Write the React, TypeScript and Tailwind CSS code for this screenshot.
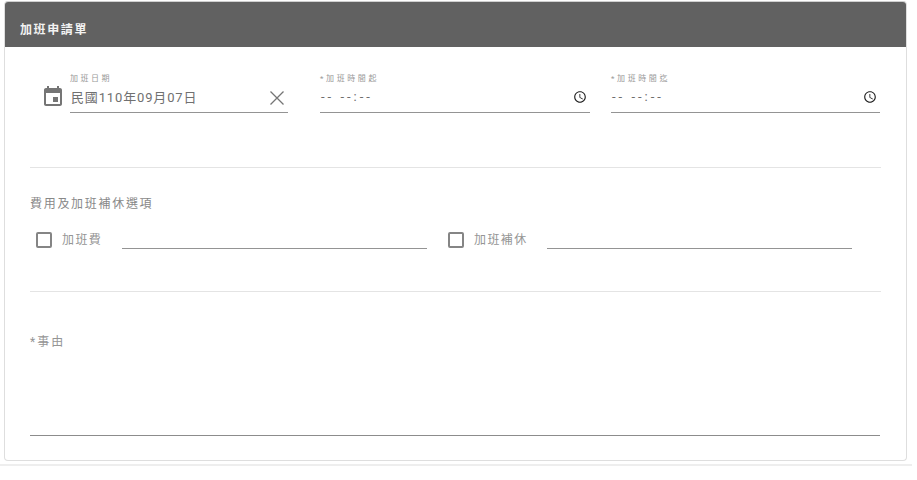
const FONT = "font-['Roboto','Noto_Sans_CJK_TC',sans-serif]";

function ClockIcon() {
  return (
    <svg width="14" height="14" viewBox="0 0 24 24" fill="#212121">
      <path d="M11.99 2C6.47 2 2 6.48 2 12s4.47 10 9.99 10C17.52 22 22 17.52 22 12S17.52 2 11.99 2zM12 20c-4.42 0-8-3.58-8-8s3.58-8 8-8 8 3.58 8 8-3.58 8-8 8z" />
      <path d="M12.5 7H11v6l5.25 3.15.75-1.23-4.5-2.67z" />
    </svg>
  );
}

function EventIcon() {
  return (
    <svg width="24" height="24" viewBox="0 0 24 24" fill="#757575">
      <path d="M17 12h-5v5h5v-5zM16 1v2H8V1H6v2H5c-1.11 0-1.99.9-1.99 2L3 19c0 1.1.89 2 2 2h14c1.1 0 2-.9 2-2V5c0-1.1-.9-2-2-2h-1V1h-2zm3 18H5V8h14v11z" />
    </svg>
  );
}

function CloseIcon() {
  return (
    <svg width="24" height="24" viewBox="0 0 24 24" fill="none" stroke="#757575" strokeWidth="1.3">
      <path d="M5.5 5.5l13 13M18.5 5.5l-13 13" />
    </svg>
  );
}

function TimeField({ label, width }: { label: string; width: string }) {
  return (
    <div className={`${width} h-[41px] pt-[2px] border-b border-[#949494]`}>
      <div className="text-[8px] leading-[10px] tracking-[2.6px] text-[#999999]">{label}</div>
      <div className="flex items-center justify-between mt-[5px] pr-[3px]">
        <span className="ml-[1px] text-[13px] leading-[16px] tracking-[3px] text-[#6e6e6e]">-- --:--</span>
        <ClockIcon />
      </div>
    </div>
  );
}

function CheckItem({ label, labelWidth, lineWidth }: { label: string; labelWidth: string; lineWidth: string }) {
  return (
    <div className="flex items-start">
      <span className="w-4 h-4 mt-[1px] rounded-[2px] border-2 border-[#858585] bg-white" />
      <span className={`${labelWidth} ml-[10px] text-[12px] leading-[18px] tracking-[1.4px] text-[#959595]`}>{label}</span>
      <span className={`${lineWidth} h-[18px] border-b border-[#949494]`} />
    </div>
  );
}

export default function App() {
  return (
    <div className={`${FONT} h-[480px] w-[917px] bg-white overflow-hidden`}>
      <div className="w-[912px]">
        <div className="ml-[4px] mt-[1px] w-[903px] h-[460px] rounded-[4px] border border-[#dedede] border-t-[#cfcfcf] bg-white overflow-hidden">
          <div className="h-[45px] bg-[#616161] px-[15px] pt-[19px] text-[12px] leading-[18px] font-bold tracking-[1.6px] text-[#f2f2f2]">
            加班申請單
          </div>

          <div className="pl-[25px] pr-[25px]">
            <div className="flex h-[121px] border-b border-[#e4e4e4] pt-[25px] w-[851px]">
              <div className="flex items-start ml-[11px]">
                <div className="mt-[13px] mr-[5px]">
                  <EventIcon />
                </div>
                <div className="w-[218px] h-[41px] pt-[2px] border-b border-[#949494]">
                  <div className="text-[8px] leading-[10px] tracking-[2.5px] text-[#999999]">加班日期</div>
                  <div className="flex items-center justify-between mt-[2px]">
                    <span className="ml-[1px] text-[13px] leading-[18px] tracking-[0.85px] text-[#707070]">民國110年09月07日</span>
                    <span className="-mr-[1px]">
                      <CloseIcon />
                    </span>
                  </div>
                </div>
              </div>
              <div className="ml-[32px]">
                <TimeField label="*加班時間起" width="w-[270px]" />
              </div>
              <div className="ml-[21px]">
                <TimeField label="*加班時間迄" width="w-[269px]" />
              </div>
            </div>

            <div className="h-[124px] border-b border-[#e4e4e4] w-[851px] pt-[27px]">
              <div className="text-[12px] leading-[18px] tracking-[1.7px] text-[#888888]">費用及加班補休選項</div>
              <div className="flex mt-[18px] ml-[6px]">
                <CheckItem label="加班費" labelWidth="w-[60px]" lineWidth="w-[305px]" />
                <div className="ml-[21px]">
                  <CheckItem label="加班補休" labelWidth="w-[73px]" lineWidth="w-[305px]" />
                </div>
              </div>
            </div>

            <div className="h-[144px] border-b border-[#8c8c8c] w-[850px] pt-[41px] text-[12px] leading-[18px] tracking-[2px] text-[#959595]">
              *事由
            </div>
          </div>
        </div>
        <div className="mt-[3px] h-[2px] bg-[#eeeeee]" />
      </div>
    </div>
  );
}
